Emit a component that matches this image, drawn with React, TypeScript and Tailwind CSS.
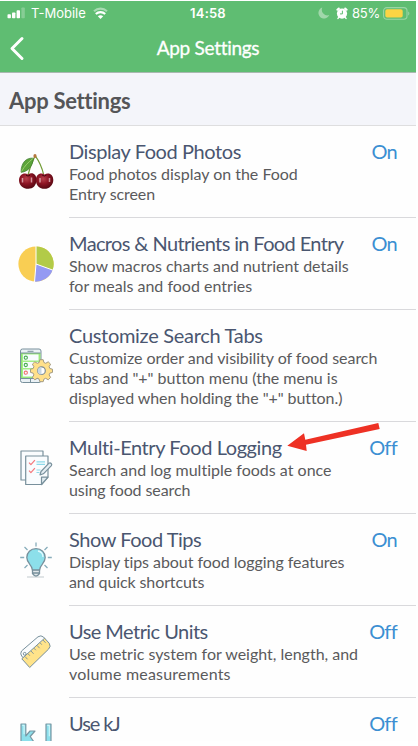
import type { ReactNode } from 'react'
import clsx from 'clsx'

type Setting = {
  title: string
  titleClass: string
  lines: [string, string][]
  value?: 'On' | 'Off'
  icon: ReactNode
}

function SignalIcon() {
  return (
    <svg className="shrink-0" width="19" height="12" viewBox="0 0 19 12" fill="#fff">
      <rect x="0.5" y="7.3" width="3.4" height="3.9" rx="0.8" />
      <rect x="5" y="5.5" width="3.4" height="5.7" rx="0.8" />
      <rect x="9.6" y="3.2" width="3.4" height="8" rx="0.8" />
      <rect x="14.4" y="0.5" width="3.4" height="10.7" rx="0.8" opacity="0.25" />
    </svg>
  )
}

function WifiIcon() {
  return (
    <svg className="shrink-0" width="15" height="12" viewBox="0 0 15 12" fill="none" stroke="#fff" strokeWidth="2.1">
      <path d="M1 4.3C4.7.7 10.3.7 14 4.3" opacity="0.45" />
      <path d="M2.8 7c2.700-2.500 6.700-2.500 9.400 0" />
      <path d="M7.5 12 4.8 9.200c1.6-1.3 3.800-1.3 5.400 0z" fill="#fff" stroke="none" />
    </svg>
  )
}

function MoonIcon() {
  return (
    <svg width="12" height="12" viewBox="0 0 12 12" fill="#a0d7aa">
      <path d="M4.3.6a5.6 5.6 0 1 0 6.9 7.5A5.6 5.6 0 0 1 4.3.6z" />
    </svg>
  )
}

function AlarmIcon() {
  return (
    <svg width="12" height="13" viewBox="0 0 12 13">
      <path d="M1.4 2.800 2.800 1.500M10.600 2.800 9.200 1.500" stroke="#fff" strokeWidth="2" strokeLinecap="round" />
      <path d="m2 11.400.8-1M10 11.400l-.8-1" stroke="#fff" strokeWidth="1.500" strokeLinecap="round" />
      <circle cx="6" cy="6.6" r="5.100" fill="#fff" />
      <path d="M6.4 3.7v3.2H4" stroke="#5fbd72" strokeWidth="1" fill="none" />
    </svg>
  )
}

function BatteryIcon() {
  return (
    <svg width="27" height="13" viewBox="0 0 27 13">
      <rect x="0.6" y="0.6" width="23.4" height="11.6" rx="3.2" fill="none" stroke="#9ad5a6" strokeWidth="1.1" />
      <rect x="2.3" y="2.2" width="17.4" height="8.4" rx="1.8" fill="#fbd444" />
      <path d="M25.2 4.4c1.6.6 1.6 3.4 0 4z" fill="#9ad5a6" />
    </svg>
  )
}

function CherryIcon() {
  return (
    <svg width="36" height="38" viewBox="0 0 36 38">
      <defs>
        <radialGradient id="cherry" cx="42%" cy="35%" r="65%">
          <stop offset="0" stopColor="#b8414b" />
          <stop offset="0.5" stopColor="#8d1424" />
          <stop offset="1" stopColor="#560812" />
        </radialGradient>
      </defs>
      <path d="M16.8 3.4C14 9 11.5 15 10 22M17.6 3.4c3.6 5 6.3 11 8 18" fill="none" stroke="#719b35" strokeWidth="1.2" />
      <path d="M15.3 5.2C9 4.6 3.2 8.4 3 19.3 8.5 19 14.8 14.6 15.3 5.2z" fill="#5ca43a" stroke="#38762a" strokeWidth="0.7" />
      <path d="M15 5.5C10.500 9 6.500 13 3.500 18.500" stroke="#b5dd84" strokeWidth="0.7" fill="none" />
      <ellipse cx="17" cy="3" rx="1.6" ry="2" fill="#b5763d" />
      <path d="M10 21.400c4-2.600 8.500-.600 8.500 5.400 0 5.700-3.500 9-8.200 9-5 0-9.300-3.500-9.300-8.600 0-5.200 5-8.200 9-5.800z" fill="url(#cherry)" />
      <path d="M26.500 21.400c4.500-2.600 8.800.200 8.800 5.600 0 5.200-4 8.800-8.800 8.800-4.900 0-8.600-3.400-8.600-8.800 0-5.500 4.500-8.200 8.600-5.600z" fill="url(#cherry)" />
      <path d="M4.500 25v4.500M13.500 24.500v5M22 25v4.500M31.500 25v4" stroke="#eecbd0" strokeWidth="1.500" opacity="0.7" />
      <path d="M8 22.200q2 1.600 4 0M24.200 22.200q2.200 1.600 4.200 0" stroke="#400710" fill="none" />
    </svg>
  )
}

function PieIcon() {
  return (
    <svg width="36" height="36" viewBox="0 0 36 36">
      <circle cx="18" cy="18" r="17.600" fill="#f9ce53" />
      <path d="M18 18 16.600 35.600A17.600 17.600 0 0 0 34.600 24z" fill="#949af3" />
      <path d="M18 18V.400A17.600 17.600 0 0 1 34.600 24z" fill="#b2cb48" />
      <path d="M18 0v18l-1.500 18M18 18l17 6.200" fill="none" stroke="#fff" strokeWidth="1" />
    </svg>
  )
}

function PhoneGearIcon() {
  return (
    <svg width="34" height="36" viewBox="0 0 34 36" stroke="#78909c" strokeWidth="1">
      <rect x="1.500" y="1" width="20.500" height="33.500" rx="2" fill="#eaf1f5" />
      <rect x="2.500" y="5.500" width="18.500" height="24.500" fill="#a5ee88" stroke="#8fe370" />
      <path d="M4 6.500h15.500v6H4zM4 14h15.500v6H4zM4 21.500h15.500v7H4z" fill="#f8fcff" stroke="none" />
      <path d="M8.500 3.300h6M11.500 31v3M2 30.500h19.500M2 5h19.500" fill="none" />
      <circle cx="6.800" cy="9.700" r="1.600" fill="none" stroke="#48ad52" strokeWidth="1.100" />
      <circle cx="6.800" cy="17" r="1.600" fill="none" stroke="#48ad52" strokeWidth="1.100" />
      <circle cx="6.800" cy="24.700" r="1.600" fill="none" stroke="#f17272" strokeWidth="1.100" />
      <path
        d="m20.800 11.700 3.400 0 .7 2.800 1.800.8 2.500-1.500 2.400 2.400-1.500 2.500.8 1.800 2.600.7v3.200l-2.600.7-.8 1.800 1.500 2.500-2.400 2.400-2.500-1.500-1.800.8-.7 2.600h-3.400l-.7-2.600-1.800-.8-2.500 1.500-2.400-2.400 1.500-2.500-.8-1.800-2.600-.7v-3.200l2.600-.7.8-1.800-1.500-2.500 2.400-2.400 2.500 1.500 1.800-.8z"
        fill="#ffe08a"
        stroke="#a39b84"
        strokeLinejoin="round"
      />
      <circle cx="22.500" cy="22.700" r="3.800" fill="#fff" stroke="#7d8b93" strokeWidth="1.200" />
      <path d="M22.500 18.900a3.800 3.800 0 0 0 0 7.600z" fill="#c8d8e2" stroke="none" />
    </svg>
  )
}

function ChecklistIcon() {
  return (
    <svg width="33" height="36" viewBox="0 0 33 36" fill="#f9fcfe" stroke="#78909c" strokeWidth="1.200" strokeLinejoin="round">
      <path d="M1 1h22v29H1z" />
      <path d="M5.700 6H28v21.200L21.500 34.500H5.700z" />
      <path d="M21.500 34.500v-7.300H28z" fill="#dfeaf0" />
      <path d="m9 12.700 1.900 1.900 4-4.500M9 20.700l1.900 1.900 4-4.500" fill="none" stroke="#f4787d" strokeWidth="1.200" />
      <path d="M16.500 11.800H25M16.500 14.300H25M16.500 20h4M16.500 22.500h3" fill="none" stroke="#8ed9ea" />
      <path d="m21 21.500 8-8.300q1.200-.700 2.200.3 1 1 .2 2.200l-8 8.100-3.400 1.100z" fill="#e4edf3" />
    </svg>
  )
}

function BulbIcon() {
  return (
    <svg width="34" height="36" viewBox="0 0 34 36" fill="none" stroke="#78909c" strokeWidth="1.300">
      <path d="M8 35h17" stroke="#dde1e4" strokeWidth="1.800" />
      <path d="M17 .500v4M5.500 5l3 3M28.500 5l-3 3M1.200 15.500h4M28.800 15.500h4M5.500 26l3-3M28.500 26l-3-3" stroke="#88adbb" />
      <path d="M17 6.700c-5.400 0-9.200 3.800-9.200 8.900 0 5.900 5.200 6.800 5.700 12.500h7c.500-5.700 5.700-6.600 5.700-12.500 0-5.100-3.800-8.900-9.200-8.900z" fill="#8cdfea" />
      <path d="M19 9c3 .6 5 3 5 6" stroke="#e2faff" />
      <path d="M13.500 28.200h7v3.500q-3.500 4.800-7 0zM13.500 31h7" fill="#e2e8eb" />
    </svg>
  )
}

function RulerIcon() {
  return (
    <svg width="32" height="36" viewBox="0 0 32 36" stroke="#78909c" strokeLinejoin="round">
      <path d="M1.500 17 18 2.800q3-2 5.500.2l2 2.500L7 23.500q-3 1.500-5-.8-2.300-3-.5-5.700z" fill="#fafcfd" />
      <path d="M1.800 24.800 24.600 4.200l4.600 5q2.200 3.200-.7 6L9.700 33.500z" fill="#ffe38a" />
      <circle cx="4.700" cy="19.800" r="1.400" fill="#fff" />
      <path d="m5 22.500 2.600 2.800M8 19.700l1.800 2M11 17l2.600 2.800M14 14.200l1.800 2M17 11.400l2.600 2.800M20 8.700l1.800 2M23 6l2.600 2.800" fill="none" strokeWidth="0.9" />
    </svg>
  )
}

function KjIcon() {
  return (
    <svg width="33" height="22" viewBox="0 0 33 22" fill="#8cdfeb" stroke="#7897a3" strokeWidth="1.200" strokeLinejoin="round">
      <path d="M1 1h4.800v12l4.200-5h5l-4.800 5.500L16 22H1z" />
      <path d="M26 1h5v17q0 7-7 7-6 0-7-6h4.500q.500 2.200 2.500 2 2-.2 2-3z" />
      <path d="M2.300 2.300h1.800v9M27.300 2.300h2v11" fill="none" stroke="#cef5fa" />
    </svg>
  )
}

const settings: Setting[] = [
  {
    title: 'Display Food Photos',
    titleClass: 'tracking-[-0.42px]',
    lines: [
      ['Food photos display on the Food', 'tracking-[-0.01px]'],
      ['Entry screen', 'tracking-[-0.1px]'],
    ],
    value: 'On',
    icon: <CherryIcon />,
  },
  {
    title: 'Macros & Nutrients in Food Entry',
    titleClass: 'tracking-[-0.63px]',
    lines: [
      ['Show macros charts and nutrient details', 'tracking-[-0.01px]'],
      ['for meals and food entries', 'tracking-[0.01px]'],
    ],
    value: 'On',
    icon: <PieIcon />,
  },
  {
    title: 'Customize Search Tabs',
    titleClass: 'tracking-[-0.3px]',
    lines: [
      ['Customize order and visibility of food search', 'tracking-[-0.04px]'],
      ['tabs and "+" button menu (the menu is', 'tracking-[-0.02px]'],
      ['displayed when holding the "+" button.)', 'tracking-[-0.07px]'],
    ],
    icon: <PhoneGearIcon />,
  },
  {
    title: 'Multi-Entry Food Logging',
    titleClass: 'tracking-[-0.42px]',
    lines: [
      ['Search and log multiple foods at once', 'tracking-[0.01px]'],
      ['using food search', 'tracking-[-0.1px]'],
    ],
    value: 'Off',
    icon: <ChecklistIcon />,
  },
  {
    title: 'Show Food Tips',
    titleClass: 'tracking-[-0.46px]',
    lines: [
      ['Display tips about food logging features', 'tracking-[-0.06px]'],
      ['and quick shortcuts', 'tracking-[-0.1px]'],
    ],
    value: 'On',
    icon: <BulbIcon />,
  },
  {
    title: 'Use Metric Units',
    titleClass: 'tracking-[-0.55px]',
    lines: [
      ['Use metric system for weight, length, and', 'tracking-[-0.01px]'],
      ['volume measurements', 'tracking-[0.2px]'],
    ],
    value: 'Off',
    icon: <RulerIcon />,
  },
  {
    title: 'Use kJ',
    titleClass: 'tracking-[-1.1px]',
    lines: [['Display energy in kilojoules', 'tracking-[-0.01px]']],
    value: 'Off',
    icon: <KjIcon />,
  },
]

function SettingRow({ setting }: { setting: Setting }) {
  const { title, titleClass, lines, value, icon } = setting
  return (
    <div className="flex shrink-0">
      <div className="flex w-[69px] shrink-0 items-center justify-center pl-[3px]">{icon}</div>
      <div className="flex flex-1 justify-between border-b border-[#d9d9dc] pt-[12px] pb-[13px]">
        <div className="whitespace-nowrap">
          <h2 className={clsx('text-[20px] leading-[26px] text-[#4a5670]', titleClass)}>{title}</h2>
          {lines.map(([text, cls]) => (
            <p key={text} className={clsx('text-[16px] leading-[20px] text-[#5a5a5c]', cls)}>
              {text}
            </p>
          ))}
        </div>
        {value && (
          <span className="shrink-0 pr-[19px] text-[20px] leading-[26px] tracking-[-0.7px] text-[#3b8fd2]">{value}</span>
        )}
      </div>
    </div>
  )
}

export default function App() {
  return (
    <div className="h-[746px] w-[418px] overflow-hidden bg-white pt-px font-['Lato',sans-serif]">
      <div className="relative flex h-[740px] w-[416px] flex-col overflow-hidden bg-[#fefefe]">
        <header className="h-[71px] shrink-0 bg-[#5fbd72] text-white">
          <div className="grid h-[24px] grid-cols-3 items-center font-['Inter',sans-serif] text-[13px] leading-none">
            <div className="flex items-center pl-[7px]">
              <SignalIcon />
              <span className="ml-[5px] mr-[7px] whitespace-nowrap">T-Mobile</span>
              <WifiIcon />
            </div>
            <span className="text-center font-semibold tracking-[0.2px]">14:58</span>
            <div className="flex items-center justify-end pr-[6px]">
              <MoonIcon />
              <span className="ml-[6px] mr-[4px]">
                <AlarmIcon />
              </span>
              <span className="mr-[3px] tracking-[-0.2px]">85%</span>
              <BatteryIcon />
            </div>
          </div>
          <div className="grid h-[46px] grid-cols-[40px_1fr_40px] items-center">
            <svg className="ml-[9px]" width="16" height="25" viewBox="0 0 16 25" fill="none" stroke="#fff" strokeWidth="3" strokeLinecap="round" strokeLinejoin="round">
              <path d="M13 2.500 3 12.500l10 10" />
            </svg>
            <h1 className="text-center text-[19px] tracking-[-0.3px] [-webkit-text-stroke:0.3px_#fff]">App Settings</h1>
          </div>
        </header>
        <div className="flex h-[54px] shrink-0 items-center border-y border-t-[#a9b8b0] border-b-[#dededf] bg-[#f4f5fa] pt-[3px] pl-[9px]">
          <h2 className="text-[22px] font-bold tracking-[-0.3px] text-[#555558]">App Settings</h2>
        </div>
        {settings.map((setting) => (
          <SettingRow key={setting.title} setting={setting} />
        ))}
        {/* callout pointing at multi-entry logging */}
        <svg className="absolute left-[286px] top-[420px]" width="96" height="32" viewBox="286 421 96 32">
          <path d="M287.300 445.700 304 433.300 305.300 439.700 378.300 423 379.700 429 306 444.700 306.700 451z" fill="#ee3124" />
        </svg>
      </div>
    </div>
  )
}
